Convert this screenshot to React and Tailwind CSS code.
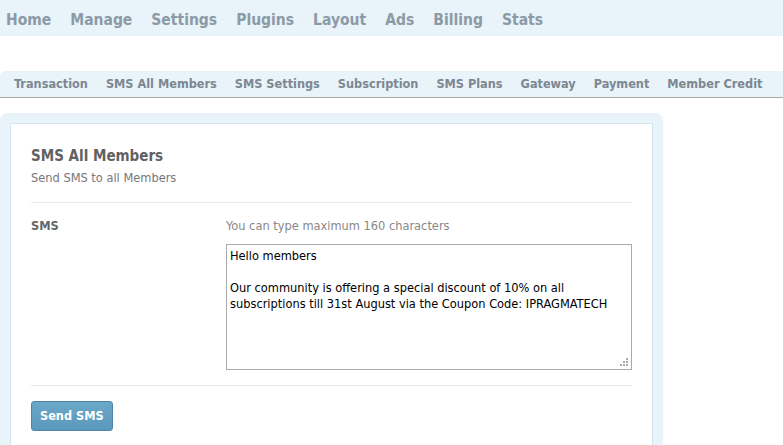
const topNav = ['Home', 'Manage', 'Settings', 'Plugins', 'Layout', 'Ads', 'Billing', 'Stats']
const subNav = ['Transaction', 'SMS All Members', 'SMS Settings', 'Subscription', 'SMS Plans', 'Gateway', 'Payment', 'Member Credit']

const message = `Hello members

Our community is offering a special discount of 10% on all subscriptions till 31st August via the Coupon Code: IPRAGMATECH`

// little dotted grip in the textarea corner
const Grip = () => (
  <svg width="9" height="9" viewBox="0 0 9 9" className="absolute right-[3px] bottom-[3px]">
    <rect x="6" y="0" width="2" height="2" fill="#aaa" />
    <rect x="3" y="3" width="2" height="2" fill="#aaa" />
    <rect x="6" y="3" width="2" height="2" fill="#aaa" />
    <rect x="0" y="6" width="2" height="2" fill="#aaa" />
    <rect x="3" y="6" width="2" height="2" fill="#aaa" />
    <rect x="6" y="6" width="2" height="2" fill="#aaa" />
  </svg>
)

export default function App() {
  return (
    <div className="w-[783px] h-[445px] overflow-hidden bg-white font-['DejaVu_Sans_Condensed','DejaVu_Sans',sans-serif]">
      <div className="h-9 bg-[#e8f3fa] flex items-center gap-[19px] px-[6px] pt-[3px]">
        {topNav.map((item) => (
          <span key={item} className="text-[15.5px] leading-5 font-bold text-[#8c9aa6]">{item}</span>
        ))}
      </div>

      <div className="mt-[35px] h-[27px] bg-[#e8f3fa] rounded-tl-md border-b border-[#a9a9a9] flex items-center gap-[18px] pl-[14px]">
        {subNav.map((item) => (
          <span key={item} className="text-[12.6px] leading-4 font-bold text-[#7d8791] whitespace-nowrap">{item}</span>
        ))}
      </div>

      <div className="mt-[15px] w-[663px] bg-[#e8f3fa] rounded-t-lg pt-[10px] px-[10px]">
        <div className="bg-white border border-[#d4e5f0] border-b-0 px-5 pt-[22px] pb-4">
          <h2 className="text-[15px] font-bold text-[#616161] leading-5">SMS All Members</h2>
          <p className="text-[12.7px] leading-4 text-[#777] mt-[4px]">Send SMS to all Members</p>
          <div className="border-t border-[#e8e8e8] mt-[16px]" />

          <div className="flex pt-[15px]">
            <div className="w-[195px] text-[12.7px] leading-4 font-bold text-[#666]">SMS</div>
            <div className="flex-1">
              <p className="text-[12.7px] leading-4 text-[#888]">You can type maximum 160 characters</p>
              <div className="relative mt-[10px]">
                <textarea
                  readOnly
                  defaultValue={message}
                  className="block w-full h-[126px] border border-[#aaa] px-[3px] py-[3px] text-[12.7px] leading-4 text-black font-['DejaVu_Sans_Condensed','DejaVu_Sans',sans-serif] resize-none outline-none"
                />
                <Grip />
              </div>
            </div>
          </div>

          <div className="border-t border-[#e8e8e8] mt-[15px]" />
          <button className="mt-[15px] h-[30px] px-2 rounded-[3px] border border-[#4f86a8] bg-gradient-to-b from-[#6aa7c8] to-[#5b99bc] text-white text-[12.6px] font-bold">
            Send SMS
          </button>
          <div className="h-20" />
        </div>
      </div>
    </div>
  )
}
